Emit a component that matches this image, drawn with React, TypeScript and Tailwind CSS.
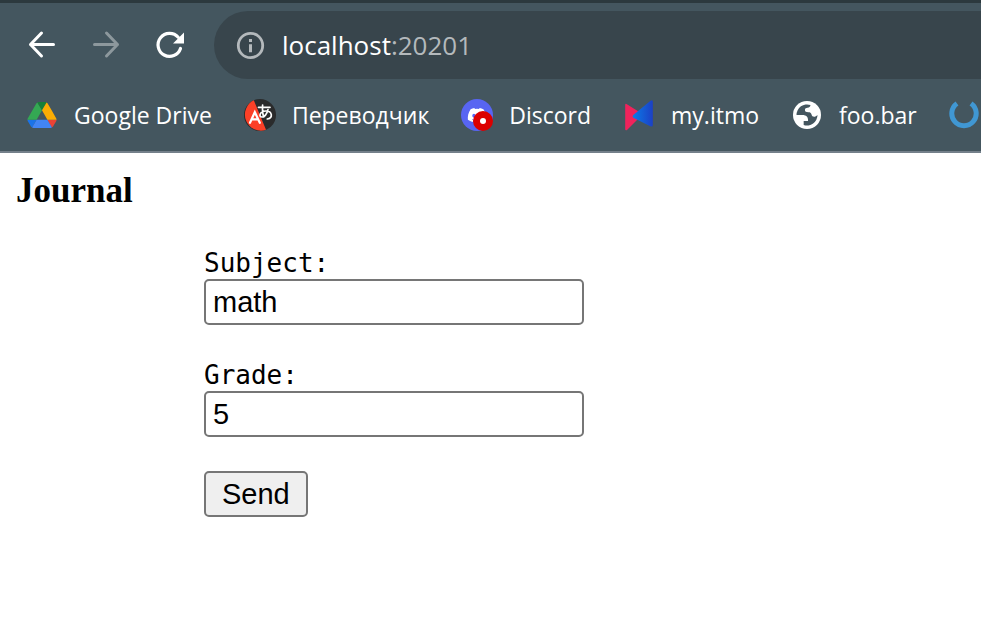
import { useState } from "react";
import type { ReactNode } from "react";
import { FaDiscord } from "react-icons/fa";

function BackIcon() {
  return (
    <svg className="size-8" viewBox="0 0 32 32" fill="none" stroke="currentColor" strokeWidth="3" strokeLinecap="round" strokeLinejoin="round">
      <path d="M27.500 15.500H4.500M15.500 4 4.500 15.500 15.500 27" />
    </svg>
  );
}

function ForwardIcon() {
  return (
    <svg className="size-8" viewBox="0 0 32 32" fill="none" stroke="currentColor" strokeWidth="3" strokeLinecap="round" strokeLinejoin="round">
      <path d="M4.500 15.500H27.500M16.500 4 27.500 15.500 16.500 27" />
    </svg>
  );
}

function ReloadIcon() {
  return (
    <svg className="size-8" viewBox="0 0 32 32" fill="none">
      <path d="M26.500 19.500A11.500 11.500 0 1 1 24.200 8.300" stroke="currentColor" strokeWidth="3.200" strokeLinecap="round" />
      <path d="M30 3.500v11H19z" fill="currentColor" />
    </svg>
  );
}

function InfoIcon() {
  return (
    <svg className="size-8" viewBox="0 0 32 32" fill="none" aria-hidden="true">
      <circle cx="16.5" cy="16.5" r="12.200" stroke="currentColor" strokeWidth="2.8" />
      <path d="M15 10h3v3h-3zM15 15.300h3v8h-3z" fill="currentColor" />
    </svg>
  );
}

function DriveIcon() {
  return (
    <span className="flex size-8 items-center justify-center">
      <svg className="h-[26px] w-[30px]" viewBox="0 0 87.3 78" aria-hidden="true">
        <path d="m6.6 66.85 3.85 6.65c.8 1.4 1.95 2.5 3.3 3.3l13.75-23.8h-27.5c0 1.55.4 3.1 1.2 4.5z" fill="#1a73e8" />
        <path d="m43.65 25-13.75-23.8c-1.35.8-2.5 1.9-3.3 3.3l-25.4 44a9.06 9.06 0 0 0 -1.2 4.5h27.5z" fill="#34a853" />
        <path d="m73.55 76.8c1.35-.8 2.5-1.9 3.3-3.3l1.6-2.75 7.65-13.25c.8-1.4 1.2-2.95 1.2-4.5h-27.502l5.852 11.5z" fill="#ea4335" />
        <path d="m43.65 25 13.75-23.8c-1.35-.8-2.9-1.2-4.5-1.2h-18.5c-1.6 0-3.15.45-4.5 1.2z" fill="#188038" />
        <path d="m59.8 53h-32.3l-13.75 23.8c1.35.8 2.9 1.2 4.5 1.2h50.8c1.6 0 3.15-.45 4.5-1.2z" fill="#4285f4" />
        <path d="m73.4 26.5-12.7-22c-.8-1.4-1.95-2.5-3.3-3.3l-13.75 23.8 16.15 28h27.45c0-1.55-.4-3.1-1.2-4.5z" fill="#fbad04" />
      </svg>
    </span>
  );
}

function TranslateIcon() {
  return (
    <svg className="size-8" viewBox="0 0 32 32" fill="none" strokeLinecap="round" aria-hidden="true">
      <circle cx="16" cy="16" r="16" fill="#2a2b2c" />
      <path d="M9.8 1.3A16 16 0 0 0 22 30.8z" fill="#fc4027" />
      <path d="M6 23.800 10.800 13.200 15.800 23.800M7.600 20.300h6.400" stroke="#fff" strokeWidth="2.200" />
      <path d="M14.500 8.300h11.500M18.600 6c-.3 5-.1 8.500 1.100 12M24 10.500c-1 4-3.500 7.500-6.200 7.500-3.300 0-2.200-6 4-6 6.600 0 7.500 6.700 1.500 8" stroke="#fff" strokeWidth="1.700" />
    </svg>
  );
}

function DiscordIcon() {
  return (
    <span className="relative flex size-8 items-center justify-center rounded-full bg-[#5865f2]">
      <FaDiscord className="size-5 text-white" />
      <span className="absolute right-0 bottom-0 flex size-5 items-center justify-center rounded-full bg-[#dc0000]">
        <span className="size-1.5 rounded-full bg-white" />
      </span>
    </span>
  );
}

function ItmoIcon() {
  return (
    <svg className="size-8" viewBox="0 0 32 32" aria-hidden="true">
      <defs>
        <linearGradient id="itmo-blue" x1="0" x2="1" y1="0" y2="0">
          <stop offset="0" stopColor="#0b7be8" />
          <stop offset="1" stopColor="#1c40c4" />
        </linearGradient>
      </defs>
      <path d="M3.500 5 15.500 12.500v7L4 31q-1.800.8-1.800-1V6q0-1.600 1.300-1z" fill="#f0235c" />
      <path d="M10.300 16 27.500 1.800q2-1.200 2.300.8V26q0 2-2 1.500L10.300 18.700q-1.500-1.300 0-2.700z" fill="url(#itmo-blue)" />
    </svg>
  );
}

function GlobeIcon() {
  return (
    <svg className="size-8" viewBox="0 0 32 32" aria-hidden="true">
      <g transform="translate(2 2) scale(1.75)">
        <circle cx="8" cy="8" r="8" fill="#fff" />
        <path d="M2 8h3.350c2.300 0 3.400 1.150 3.250 3.450H6.100v2.250A6 6 0 0 0 14 8c-.7.700-1.300 1-1.900 1-.9 0-1.300-.5-1.500-1.300-.3-1-.8-1.300-1.800-1.300-1.300 0-2-.3-2-1.200s.7-1.200 1.500-1.300c1-.1 1.500-.6 1.700-1.600A6 6 0 0 0 2 8z" fill="#44565f" />
      </g>
    </svg>
  );
}

function RingIcon() {
  return (
    <svg className="size-8" viewBox="0 0 32 32" fill="none" aria-hidden="true">
      <path d="M8 4.500A12.200 12.200 0 1 0 22 4.500" stroke="#4097d3" strokeWidth="5" />
    </svg>
  );
}

function Bookmark({ icon, label }: { icon: ReactNode; label: string }) {
  return (
    <a href="#" className="flex shrink-0 items-center gap-4 whitespace-nowrap text-[23px] leading-8 text-white">
      {icon}
      <span>{label}</span>
    </a>
  );
}

function Field({ id, label, initial }: { id: string; label: string; initial: string }) {
  const [value, setValue] = useState(initial);
  return (
    <div className="flex flex-col">
      <label htmlFor={id} className="font-['DejaVu_Sans_Mono',monospace] text-[26px] leading-8">
        {label}
      </label>
      <input
        id={id}
        value={value}
        onChange={(e) => setValue(e.target.value)}
        className="h-[46px] w-[380px] max-w-full rounded-[5px] border-2 border-[#767676] bg-white px-[7px] text-[29px] leading-9"
      />
    </div>
  );
}

export default function App() {
  return (
    <div className="min-h-screen bg-white font-['Liberation_Sans',Arial,sans-serif] text-black">
      <header className="overflow-hidden border-t-[3px] border-b-2 border-t-[#2c393e] border-b-[#74808a] bg-[#44565f] font-['Open_Sans',sans-serif]">
        <div className="flex items-center gap-8 pt-2 pl-[26px]">
          <button type="button" aria-label="Back" className="text-white"><BackIcon /></button>
          <button type="button" aria-label="Forward" className="text-[#8d989d]" disabled><ForwardIcon /></button>
          <button type="button" aria-label="Reload" className="text-white"><ReloadIcon /></button>
          <div className="-ml-1 flex h-[68px] flex-1 items-center gap-4 rounded-l-full bg-[#38454c] pl-5 text-[#b4b9bc]">
            <InfoIcon />
            <p className="text-[26px] leading-9"><span className="text-white">localhost</span>:20201</p>
          </div>
        </div>
        <nav aria-label="Bookmarks" className="flex h-[72px] items-center gap-8 pl-[26px]">
          <Bookmark icon={<DriveIcon />} label="Google Drive" />
          <Bookmark icon={<TranslateIcon />} label="Переводчик" />
          <Bookmark icon={<DiscordIcon />} label="Discord" />
          <Bookmark icon={<ItmoIcon />} label="my.itmo" />
          <Bookmark icon={<GlobeIcon />} label="foo.bar" />
          <a href="#" aria-label="More" className="shrink-0"><RingIcon /></a>
        </nav>
      </header>
      <main className="px-4 pt-[18px]">
        <h3 className="font-['Liberation_Serif',serif] text-[35px] leading-10 font-bold">Journal</h3>
        <form className="mt-9 ml-[188px] flex flex-col items-start gap-[34px]" onSubmit={(e) => e.preventDefault()}>
          <Field id="subject" label="Subject:" initial="math" />
          <Field id="grade" label="Grade:" initial="5" />
          <button type="submit" className="h-[46px] rounded-[5px] border-2 border-[#767676] bg-[#efefef] px-4 text-[29px] leading-9">
            Send
          </button>
        </form>
      </main>
    </div>
  );
}
